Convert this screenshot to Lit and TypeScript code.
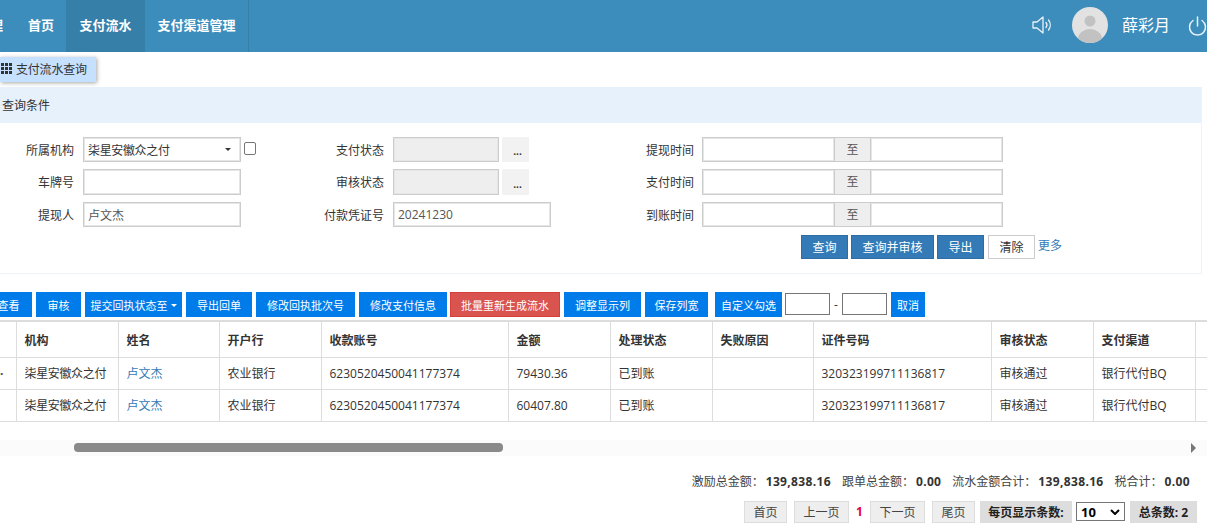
import { LitElement, html, css, svg } from "lit";
import { customElement } from "lit/decorators.js";

const COLS = ["", "机构", "姓名", "开户行", "收款账号", "金额", "处理状态", "失败原因", "证件号码", "审核状态", "支付渠道", ""];
const WIDTHS = [16, 102, 101, 102, 187, 102, 102, 101, 178, 102, 102, 12];
const ROWS = [
  ["·", "柒星安徽众之付", "卢文杰", "农业银行", "6230520450041177374", "79430.36", "已到账", "", "320323199711136817", "审核通过", "银行代付BQ", ""],
  ["", "柒星安徽众之付", "卢文杰", "农业银行", "6230520450041177374", "60407.80", "已到账", "", "320323199711136817", "审核通过", "银行代付BQ", ""],
];

@customElement("app-root")
export class AppRoot extends LitElement {
  static styles = css`
    :host { display: block; width: 1207px; height: 532px; overflow: hidden; background: #fff; position: relative;
      font-family: "Open Sans", "Noto Sans CJK SC", sans-serif; font-size: 12px; color: #333; }
    * { box-sizing: border-box; }
    .nav { height: 52px; background: #3c8dbc; display: flex; align-items: stretch; color: #fff; }
    .nav a { display: flex; align-items: center; justify-content: center; font-size: 13px; font-weight: 700; padding-bottom: 4px; }
    .cut { width: 3px; overflow: hidden; justify-content: flex-end !important; }
    .home { width: 63px; padding-left: 13px; }
    .active { width: 79px; background: #367fa9; }
    .chan { width: 104px; border-right: 1px solid #367fa9; }
    .right { margin-left: auto; display: flex; align-items: center; padding-bottom: 2px; }
    .sound { margin-right: 20px; display: block; }
    .avatar { display: block; margin-right: 14px; }
    .user { font-size: 16px; margin-right: 18px; padding-bottom: 3px; }
    .power { display: block; margin-top: 1px; }
    .tabs { height: 35px; padding-top: 5px; }
    .tab { width: 96px; height: 25px; background: #c6e0ff; box-shadow: 1px 1px 4px rgba(0,0,0,.35); display: flex; align-items: center; gap: 4px; padding: 0 0 2px 1px; letter-spacing: -.2px; }
    .panel { width: 1202px; height: 187px; border-bottom: 1px solid #eef3f8; border-right: 1px solid #eef3f8; }
    .phead { height: 36px; background: #e7f1fb; padding-left: 2px; display: flex; align-items: center; }
    .form { display: grid; grid-template-columns: 83px 158px 152px 158px 151px 301px; grid-template-rows: 25px 26px 25px; row-gap: 7px; margin-top: 14px; }
    .lab { display: flex; align-items: center; justify-content: flex-end; padding: 0 9px 0 0; }
    .lab.l3 { padding-right: 8px; }
    .ctl { display: flex; align-items: stretch; min-width: 0; }
    .inp { flex: none; width: 158px; border: 1px solid #ccc; background: #fff; padding: 0 4px; display: flex; align-items: center; color: #555; box-shadow: inset 0 0 0 1px #e6e6e6; }
    .sel { color: #333; justify-content: space-between; padding-right: 9px; }
    .org { letter-spacing: -.35px; }
    .caret { width: 0; height: 0; border: 3px solid transparent; border-top-color: #333; border-bottom: 0; }
    .chk { flex: none; width: 12px; height: 13px; border: 1px solid #767676; border-radius: 2px; margin: 5px 0 0 3px; background: #fff; }
    .dis { width: 106px; background: #eee; }
    .dots { flex: none; width: 27px; margin-left: 3px; background: #f2f2f2; display: flex; justify-content: center; align-items: center; padding: 3px 0 0 4px; font-size: 10px; font-weight: 700; }
    .dt { width: 133px; }
    .to { flex: none; width: 35px; background: #eee; border: 1px solid #ccc; border-width: 1px 0; display: flex; align-items: center; justify-content: center; color: #555; padding-bottom: 2px; }
    .actions { display: flex; margin: 8px 0 0 801px; gap: 3px; align-items: flex-start; }
    .pbtn { height: 24px; display: flex; align-items: center; justify-content: center; background: #337ab7; border: 1px solid #2e6da4; color: #fff; }
    .clr { background: #fff; color: #333; border-color: #ccc; margin-left: 1px; }
    .more { color: #337ab7; padding-top: 1px; }
    .tools { display: flex; height: 25px; margin-top: 18px; margin-left: -15px; gap: 4px; align-items: stretch; font-size: 11px; }
    .tb { background: #007bea; color: #fff; display: flex; align-items: center; justify-content: center; gap: 3px; }
    .tb.red { background: #d9534f; border: 1px solid #d43f3a; margin-left: -1px; }
    .tb.wide { margin-left: 3px; }
    .num.tight { margin-left: -1px; }
    .tc { width: 0; height: 0; border: 3px solid transparent; border-top-color: #fff; border-bottom: 0; margin-top: 2px; }
    .num { width: 45px; height: 22px; margin-top: 1px; border: 1px solid #767676; background: #fff; font-size: 12px; }
    .dash { width: 4px; display: flex; align-items: center; justify-content: center; font-size: 12px; }
    table { border-collapse: collapse; table-layout: fixed; width: 1207px; margin-top: 3px; border-top: 2px solid #ddd; }
    th, td { border: 1px solid #ddd; border-top: 0; text-align: left; padding: 0 8px; white-space: nowrap; overflow: hidden; font-weight: 400; }
    tr > :first-child { border-left: 0; padding: 0; }
    tr > :last-child { border-right: 0; }
    th { height: 36px; font-weight: 700; padding-top: 2px; }
    td { height: 32px; }
    .lnk { color: #337ab7; }
    .idx { color: #444; font-weight: 700; }
    .scroll { height: 16px; margin-top: 18px; background: #fbfbfb; display: flex; align-items: center; position: relative; }
    .thumb { margin-left: 74px; width: 429px; height: 9px; background: #8a8a8a; border-radius: 4px; }
    .arrow { position: absolute; left: 1191px; top: 3px; width: 0; height: 0; border: 5px solid transparent; border-left-color: #777; border-right: 0; }
    .sum { display: flex; justify-content: flex-end; gap: 11px; margin-top: 17px; height: 16px; align-items: center; padding-right: 17px; color: #444; }
    .sum b { color: #333; margin-left: 2px; letter-spacing: .35px; }
    .pager { display: flex; justify-content: flex-end; align-items: center; height: 22px; margin-top: 12px; padding-right: 10px; }
    .pg { height: 22px; background: #eee; border: 1px solid #ddd; display: flex; align-items: center; justify-content: center; color: #444; }
    .cur { color: #e6003c; font-weight: 700; width: 21px; text-align: center; }
    .info { height: 22px; background: #ddd; display: flex; align-items: center; justify-content: center; font-weight: 700; color: #222; }
    .psel { width: 49px; height: 19px; margin: 0 5px 0 4px; border: 1px solid #767676; background: #fff; color: #000; display: flex; align-items: center; justify-content: space-between; padding: 0 4px; font-size: 13px; font-weight: 700; }
  `;

  private w(px: number) { return `width:${px}px`; }

  render() {
    const lab = (t: string, c = "") => html`<div class="lab ${c}">${t}</div>`;
    const range = html`<div class="ctl"><div class="inp dt"></div><div class="to">至</div><div class="inp dt"></div></div>`;
    const dis = html`<div class="ctl"><div class="inp dis"></div><div class="dots">...</div></div>`;
    const pbtn = (t: string, w: number, c = "") => html`<div class="pbtn ${c}" style=${this.w(w)}>${t}</div>`;
    const tb = (t: string, w: number, c = "") => html`<div class="tb ${c}" style=${this.w(w)}>${t}</div>`;
    const pg = (t: string, w: number, ml = 0) => html`<div class="pg" style="width:${w}px;margin-left:${ml}px">${t}</div>`;
    return html`
      <div class="nav">
        <a class="cut">理</a>
        <a class="home">首页</a>
        <a class="active">支付流水</a>
        <a class="chan">支付渠道管理</a>
        <div class="right">
          <svg class="sound" width="20" height="18" viewBox="0 0 20 18" fill="none" stroke="#e8f1f7" stroke-width="1.3">
            <path d="M1 6h4l6-5v16l-6-5H1z" stroke-linejoin="round"/>
            <path d="M14 6.5a4 4 0 0 1 0 5M16.5 4a8 8 0 0 1 0 10" stroke-linecap="round"/>
          </svg>
          <svg class="avatar" width="36" height="36" viewBox="0 0 36 36">
            <defs><clipPath id="av"><circle cx="18" cy="18" r="18"/></clipPath></defs>
            <circle cx="18" cy="18" r="18" fill="#e2e2e2"/>
            <circle cx="18" cy="14" r="5.5" fill="#c2c2c2"/>
            <ellipse cx="18" cy="32" rx="12" ry="10" fill="#c2c2c2" clip-path="url(#av)"/>
          </svg>
          <div class="user">薛彩月</div>
          <svg class="power" width="19" height="20" viewBox="0 0 19 20" fill="none" stroke="#e8f1f7" stroke-width="1.5" stroke-linecap="round">
            <path d="M9.5 1v9"/><path d="M5 4.5a8 8 0 1 0 9 0"/>
          </svg>
        </div>
      </div>
      <div class="tabs">
        <div class="tab">
          <svg width="11" height="11" viewBox="0 0 11 11" fill="#333">
            ${[0, 4, 8].flatMap((y) => [0, 4, 8].map((x) => svg`<rect x=${x} y=${y} width="3" height="3"/>`))}
          </svg>
          支付流水查询
        </div>
      </div>
      <div class="panel">
        <div class="phead">查询条件</div>
        <div class="form">
          ${lab("所属机构")}
          <div class="ctl"><div class="inp sel"><span class="org">柒星安徽众之付</span><span class="caret"></span></div><div class="chk"></div></div>
          ${lab("支付状态")}${dis}${lab("提现时间", "l3")}${range}
          ${lab("车牌号")}<div class="ctl"><div class="inp"></div></div>
          ${lab("审核状态")}${dis}${lab("支付时间", "l3")}${range}
          ${lab("提现人")}<div class="ctl"><div class="inp">卢文杰</div></div>
          ${lab("付款凭证号")}<div class="ctl"><div class="inp">20241230</div></div>${lab("到账时间", "l3")}${range}
        </div>
        <div class="actions">
          ${pbtn("查询", 47)}${pbtn("查询并审核", 83)}${pbtn("导出", 47)}${pbtn("清除", 47, "clr")}
          <div class="more">更多</div>
        </div>
      </div>
      <div class="tools">
        ${tb("查看", 47)}
        ${tb("审核", 45)}
        <div class="tb" style=${this.w(97)}>提交回执状态至<span class="tc"></span></div>
        ${tb("导出回单", 66)}${tb("修改回执批次号", 99)}${tb("修改支付信息", 88)}
        ${tb("批量重新生成流水", 110, "red")}
        ${tb("调整显示列", 77)}${tb("保存列宽", 63)}${tb("自定义勾选", 67, "wide")}
        <div class="num tight"></div><div class="dash">-</div><div class="num"></div>
        ${tb("取消", 34)}
      </div>
      <table>
        <colgroup>${WIDTHS.map((w) => html`<col style=${this.w(w)} />`)}</colgroup>
        <tr>${COLS.map((c) => html`<th>${c}</th>`)}</tr>
        ${ROWS.map((r) => html`<tr>${r.map((c, i) => html`<td class=${i === 2 ? "lnk" : i === 0 ? "idx" : ""}><span class=${i === 1 ? "org" : ""}>${c}</span></td>`)}</tr>`)}
      </table>
      <div class="scroll"><div class="thumb"></div><div class="arrow"></div></div>
      <div class="sum">
        <span>激励总金额：<b>139,838.16</b></span>
        <span>跟单总金额：<b>0.00</b></span>
        <span>流水金额合计：<b>139,838.16</b></span>
        <span>税合计：<b>0.00</b></span>
      </div>
      <div class="pager">
        ${pg("首页", 43)}${pg("上一页", 55, 7)}
        <div class="cur">1</div>
        ${pg("下一页", 55)}${pg("尾页", 43, 7)}
        <div class="info" style="width:92px;margin-left:5px">每页显示条数:</div>
        <div class="psel">10<svg width="10" height="6" viewBox="0 0 10 6" fill="none" stroke="#000" stroke-width="2"><path d="M1 1l4 4 4-4"/></svg></div>
        <div class="info" style="width:67px">总条数: 2</div>
      </div>
    `;
  }
}
